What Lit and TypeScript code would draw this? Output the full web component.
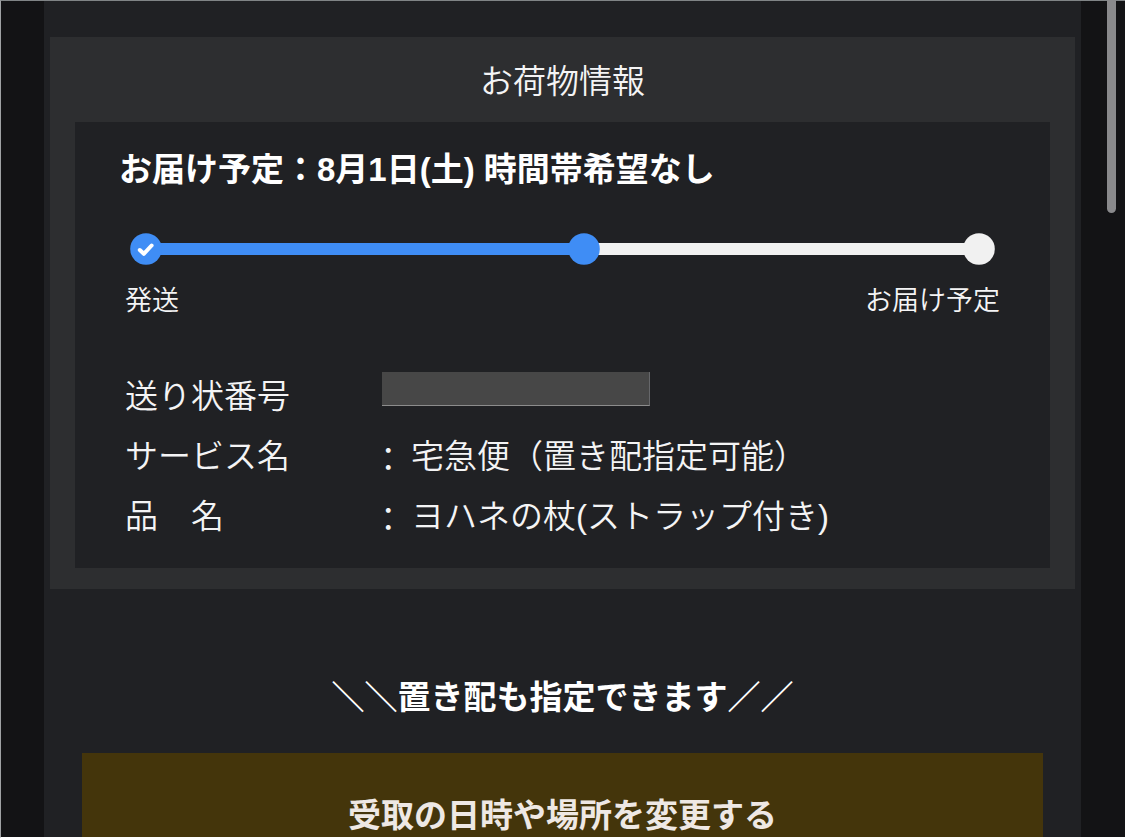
import { LitElement, html, css } from "lit";
import { customElement, property } from "lit/decorators.js";

@customElement("delivery-progress")
class DeliveryProgress extends LitElement {
  static styles = css`
    :host {
      display: block;
    }
    .track {
      display: flex;
      align-items: center;
      margin: 0 5px;
    }
    .dot {
      flex: none;
      display: block;
      z-index: 1;
      width: 32px;
      height: 32px;
    }
    .blue {
      fill: #3f8df5;
    }
    .white {
      fill: #f1f1f1;
    }
    .check {
      fill: none;
      stroke: #fff;
      stroke-width: 4;
      stroke-linecap: round;
      stroke-linejoin: round;
    }
    .bar {
      height: 12px;
      margin: 0 -2px;
    }
    .done {
      flex: 28 1 0;
      background: #3f8df5;
    }
    .rest {
      flex: 25 1 0;
      background: #f1f1f1;
    }
    .labels {
      display: flex;
      justify-content: space-between;
      margin-top: 18px;
      font-size: 27px;
      line-height: 36px;
    }
  `;

  @property() from = "";
  @property() to = "";

  render() {
    return html`
      <div class="track">
        <svg class="dot" viewBox="0 0 32 32" aria-hidden="true">
          <circle class="blue" cx="16" cy="16" r="15.8" />
          <path class="check" d="M9.8 17 L13.8 20.8 L21.6 12.5" />
        </svg>
        <div class="bar done"></div>
        <svg class="dot" viewBox="0 0 32 32" aria-hidden="true">
          <circle class="blue" cx="16" cy="16" r="15.8" />
        </svg>
        <div class="bar rest"></div>
        <svg class="dot" viewBox="0 0 32 32" aria-hidden="true">
          <circle class="white" cx="16" cy="16" r="15.8" />
        </svg>
      </div>
      <div class="labels"><span>${this.from}</span><span>${this.to}</span></div>
    `;
  }
}

@customElement("app-root")
class AppRoot extends LitElement {
  static styles = css`
    :host {
      display: block;
      position: relative;
      height: 100vh;
      color: #f4f4f5;
      font-family: "Liberation Sans", "Noto Sans CJK JP", sans-serif;
      font-weight: 350;
      font-size: 33px;
      line-height: 48px;
    }
    .page {
      box-sizing: border-box;
      height: 100%;
      overflow: hidden;
      padding: 0 44px 0 43px;
      background: #131315;
      border-top: 1px solid #808486;
      border-left: 1px solid #a0a2a4;
      border-bottom: 1px solid #fff;
    }
    .column {
      box-sizing: border-box;
      min-height: 100%;
      padding: 36px 6px 0;
      background: #202124;
    }
    .card {
      padding: 21px 25px;
      background: #2d2e30;
    }
    h2,
    h3,
    p,
    dl,
    dd {
      margin: 0;
      font-size: inherit;
    }
    .title {
      padding-bottom: 16px;
      font-weight: inherit;
      text-align: center;
    }
    .panel {
      padding: 24px 50px 21px;
      background: #202124;
    }
    .eta {
      margin: 0 -6px 39px;
      color: #fff;
      font-weight: 700;
    }
    .details {
      margin-top: 48px;
    }
    .row {
      display: grid;
      grid-template-columns: 255px 1fr;
      line-height: 60px;
    }
    .value {
      display: flex;
      gap: 16px;
    }
    .colon {
      width: 15px;
      font-feature-settings: "palt";
      font-family: "Noto Sans CJK JP", sans-serif;
    }
    .masked {
      box-sizing: border-box;
      width: 268px;
      height: 34px;
      margin: 5px 2px 0;
      background: #474747;
      border-right: 1px solid #66676a;
      border-bottom: 1px solid #8c8c8c;
    }
    .promo {
      margin-top: 85px;
      color: #fff;
      font-weight: 700;
      text-align: center;
    }
    .action {
      padding: 31px 32px 0;
    }
    button {
      display: block;
      width: 100%;
      height: 125px;
      padding: 0;
      border: 0;
      background: #44350b;
      color: #eee8e4;
      font: inherit;
      font-weight: 700;
      cursor: pointer;
    }
    .thumb {
      position: absolute;
      top: 0;
      right: 9px;
      width: 9px;
      height: 213px;
      border-radius: 0 0 5px 5px;
      background: #8a8a8c;
    }
  `;

  render() {
    return html`
      <div class="page">
        <main class="column">
          <section class="card">
            <h2 class="title">お荷物情報</h2>
            <div class="panel">
              <h3 class="eta">お届け予定：8月1日(土) 時間帯希望なし</h3>
              <delivery-progress from="発送" to="お届け予定"></delivery-progress>
              <dl class="details">
                <div class="row">
                  <dt>送り状番号</dt>
                  <dd class="value"><span class="masked"></span></dd>
                </div>
                <div class="row">
                  <dt>サービス名</dt>
                  <dd class="value"><span class="colon">：</span>宅急便（置き配指定可能）</dd>
                </div>
                <div class="row">
                  <dt>品　名</dt>
                  <dd class="value"><span class="colon">：</span>ヨハネの杖(ストラップ付き)</dd>
                </div>
              </dl>
            </div>
          </section>
          <p class="promo">＼＼置き配も指定できます／／</p>
          <div class="action">
            <button type="button">受取の日時や場所を変更する</button>
          </div>
        </main>
      </div>
      <div class="thumb"></div>
    `;
  }
}
